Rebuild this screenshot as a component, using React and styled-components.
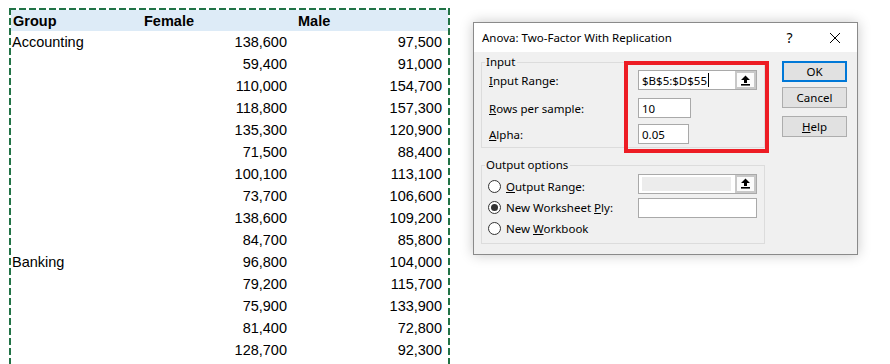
import React from 'react';
import styled, { createGlobalStyle } from 'styled-components';

const Global = createGlobalStyle`
  html, body { margin: 0; padding: 0; overflow: hidden; background: #fff; }
  body { width: 890px; height: 364px; }
`;

const Page = styled.div`
  display: flex;
  align-items: flex-start;
  width: 890px;
  height: 364px;
  overflow: hidden;
`;

/* ---------- spreadsheet ---------- */
const dash = (dir) =>
  `repeating-linear-gradient(${dir}, #217346 0 7px, transparent 7px 10px)`;

const Sheet = styled.div`
  margin: 8px 0 0 9px;
  width: 441px;
  height: 380px;
  box-sizing: border-box;
  padding: 2px 2px 0;
  background:
    ${dash('90deg')} top left / 100% 2px no-repeat,
    ${dash('180deg')} top left / 2px 100% no-repeat,
    ${dash('180deg')} top right / 2px 100% no-repeat;
  font-family: "Liberation Sans", Arial, sans-serif;
  font-size: 14.5px;
  color: #000;
`;

const SheetRow = styled.div`
  display: grid;
  grid-template-columns: 131px 152px 154px;
  height: ${(p) => (p.$head ? 21 : 22)}px;
  align-items: center;
  background: ${(p) => (p.$head ? '#ddebf7' : 'transparent')};
  font-weight: ${(p) => (p.$head ? 700 : 400)};
`;

const Cell = styled.div`
  white-space: nowrap;
  text-align: ${(p) => (p.$num ? 'right' : 'left')};
  padding-left: ${(p) => p.$pl || 0}px;
  padding-right: ${(p) => p.$pr || 0}px;
`;

const rows = [
  ['Accounting', '138,600', '97,500'],
  ['', '59,400', '91,000'],
  ['', '110,000', '154,700'],
  ['', '118,800', '157,300'],
  ['', '135,300', '120,900'],
  ['', '71,500', '88,400'],
  ['', '100,100', '113,100'],
  ['', '73,700', '106,600'],
  ['', '138,600', '109,200'],
  ['', '84,700', '85,800'],
  ['Banking', '96,800', '104,000'],
  ['', '79,200', '115,700'],
  ['', '75,900', '133,900'],
  ['', '81,400', '72,800'],
  ['', '128,700', '92,300'],
];

/* ---------- dialog ---------- */
const Dialog = styled.div`
  position: relative;
  margin: 22px 0 0 23px;
  width: 385px;
  height: 233px;
  box-sizing: border-box;
  border: 1px solid #8a8a8a;
  box-shadow: 0 0 12px rgba(0, 0, 0, 0.22);
  background: #f0f0f0;
  font-family: "Noto Sans", "Segoe UI", sans-serif;
  font-size: 11.5px;
  color: #000;
  display: flex;
  flex-direction: column;
`;

const TitleBar = styled.div`
  height: 29px;
  background: #fff;
  display: flex;
  align-items: center;
`;

const Title = styled.div`
  flex: 1;
  padding-left: 8px;
  white-space: nowrap;
`;

const TitleButton = styled.div`
  width: 45px;
  height: 29px;
  display: flex;
  align-items: center;
  justify-content: center;
  font-size: 14px;
`;

const Body = styled.div`
  flex: 1;
  display: flex;
  gap: 17px;
  padding: 2px 10px 0 7px;
`;

const LeftCol = styled.div`
  width: 284px;
  display: flex;
  flex-direction: column;
`;

const Group = styled.fieldset`
  margin: ${(p) => p.$mt || 0}px 0 0 0;
  border: 1px solid #dcdcdc;
  padding: ${(p) => p.$pt || 0}px 0 ${(p) => p.$pb || 0}px 7px;
  min-width: 0;
`;

const Legend = styled.legend`
  margin-left: -4px;
  padding: 0 2px 0 1px;
  line-height: 16px;
`;

const FormRow = styled.div`
  display: grid;
  grid-template-columns: 149px auto;
  height: ${(p) => p.$h}px;
  margin-top: ${(p) => p.$mt || 0}px;
  align-items: center;
`;

const Label = styled.div`
  display: flex;
  align-items: center;
  gap: 5px;
  white-space: nowrap;
`;

const Field = styled.div`
  box-sizing: border-box;
  width: ${(p) => p.$w}px;
  height: ${(p) => p.$h || 20}px;
  position: relative;
  top: ${(p) => p.$dy || 0}px;
  border: 1px solid #a9a9a9;
  background: #fff;
  display: flex;
  align-items: center;
  padding-left: 3px;
  white-space: nowrap;
`;

const FieldText = styled.span`
  flex: 1;
  display: flex;
  align-items: center;
`;

const Caret = styled.span`
  display: inline-block;
  width: 1px;
  height: 14px;
  background: #000;
  margin-left: 1px;
`;

const DisabledFill = styled.span`
  flex: 1;
  align-self: stretch;
  margin: 2px 4px 2px 0;
  background: #ececec;
`;

const PickButton = styled.div`
  box-sizing: border-box;
  width: 21px;
  height: 18px;
  border: 2px solid #c8c8c8;
  background: #fbfbfb;
  display: flex;
  align-items: center;
  justify-content: center;
`;

const Radio = styled.span`
  box-sizing: border-box;
  width: 13px;
  height: 13px;
  border-radius: 50%;
  border: 1px solid #333;
  background: #fff;
  display: flex;
  align-items: center;
  justify-content: center;
  margin-left: -1px;
  &::after {
    content: '';
    width: 7px;
    height: 7px;
    border-radius: 50%;
    background: ${(p) => (p.$on ? '#333' : 'transparent')};
  }
`;

const ButtonCol = styled.div`
  width: 65px;
  display: flex;
  flex-direction: column;
  padding-top: 7px;
`;

const Btn = styled.div`
  box-sizing: border-box;
  height: 21px;
  margin-top: ${(p) => p.$mt || 0}px;
  border: ${(p) => (p.$def ? '2px solid #0078d7' : '1px solid #adadad')};
  background: #e1e1e1;
  display: flex;
  align-items: center;
  justify-content: center;
`;

const Highlight = styled.div`
  position: absolute;
  left: 150px;
  top: 38px;
  width: 145px;
  height: 92px;
  box-sizing: border-box;
  border: 4px solid #ed1c24;
  pointer-events: none;
`;

const UpArrow = () => (
  <svg width="11" height="11" viewBox="0 0 11 11">
    <path d="M5.5 0.5 L10 5 L7 5 L7 8 L4 8 L4 5 L1 5 Z" fill="#000" />
    <rect x="1" y="9" width="9" height="1.6" fill="#000" />
  </svg>
);

const CloseIcon = () => (
  <svg width="12" height="12" viewBox="0 0 12 12">
    <path d="M1 1 L11 11 M11 1 L1 11" stroke="#000" strokeWidth="1" />
  </svg>
);

export default function App() {
  return (
    <>
      <Global />
      <Page>
        <Sheet>
          <SheetRow $head>
            <Cell $pl={2}>Group</Cell>
            <Cell $pl={2}>Female</Cell>
            <Cell $pl={4}>Male</Cell>
          </SheetRow>
          {rows.map((r, i) => (
            <SheetRow key={i}>
              <Cell $pl={1}>{r[0]}</Cell>
              <Cell $num $pr={7}>{r[1]}</Cell>
              <Cell $num $pr={6}>{r[2]}</Cell>
            </SheetRow>
          ))}
        </Sheet>

        <Dialog>
          <TitleBar>
            <Title>Anova: Two-Factor With Replication</Title>
            <TitleButton>?</TitleButton>
            <TitleButton>
              <CloseIcon />
            </TitleButton>
          </TitleBar>
          <Body>
            <LeftCol>
              <Group $pb={3}>
                <Legend>Input</Legend>
                <FormRow $h={20}>
                  <Label>
                    <span><u>I</u>nput Range:</span>
                  </Label>
                  <Field $w={119}>
                    <FieldText>
                      $B$5:$D$55
                      <Caret />
                    </FieldText>
                    <PickButton>
                      <UpArrow />
                    </PickButton>
                  </Field>
                </FormRow>
                <FormRow $h={20} $mt={8}>
                  <Label>
                    <span><u>R</u>ows per sample:</span>
                  </Label>
                  <Field $w={53}>10</Field>
                </FormRow>
                <FormRow $h={20} $mt={6}>
                  <Label>
                    <span><u>A</u>lpha:</span>
                  </Label>
                  <Field $w={51}>0.05</Field>
                </FormRow>
              </Group>

              <Group $mt={9} $pt={3} $pb={4}>
                <Legend>Output options</Legend>
                <FormRow $h={21}>
                  <Label>
                    <Radio />
                    <span><u>O</u>utput Range:</span>
                  </Label>
                  <Field $w={119} $dy={-3}>
                    <DisabledFill />
                    <PickButton>
                      <UpArrow />
                    </PickButton>
                  </Field>
                </FormRow>
                <FormRow $h={21}>
                  <Label>
                    <Radio $on />
                    <span>New Worksheet <u>P</u>ly:</span>
                  </Label>
                  <Field $w={119} />
                </FormRow>
                <FormRow $h={21}>
                  <Label>
                    <Radio />
                    <span>New <u>W</u>orkbook</span>
                  </Label>
                </FormRow>
              </Group>
            </LeftCol>
            <ButtonCol>
              <Btn $def>OK</Btn>
              <Btn $mt={5}>Cancel</Btn>
              <Btn $mt={8}>
                <u>H</u>elp
              </Btn>
            </ButtonCol>
          </Body>
          <Highlight />
        </Dialog>
      </Page>
    </>
  );
}
